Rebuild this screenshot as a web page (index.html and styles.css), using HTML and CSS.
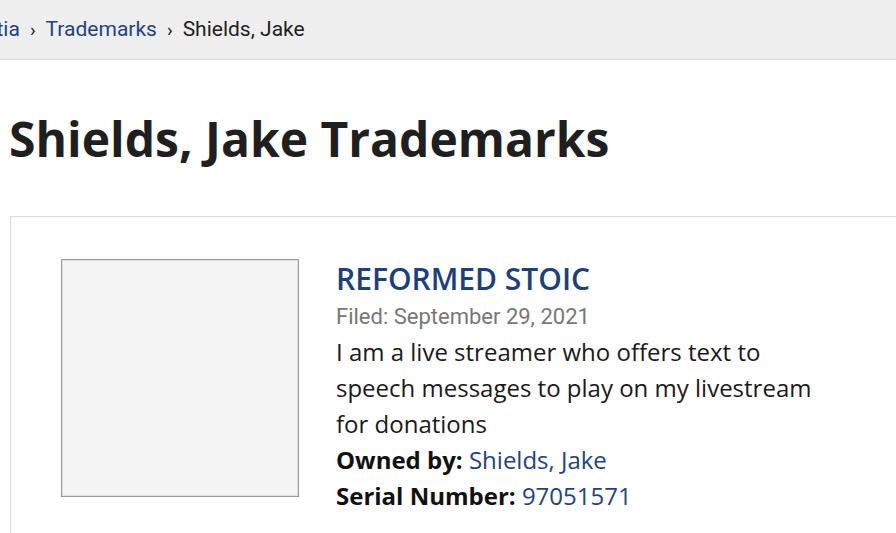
FILE: index.html
```html
<!DOCTYPE html>
<html>
<head>
<meta charset="utf-8">
<link rel="stylesheet" href="styles.css">
</head>
<body>
<nav class="crumbs">
  <a class="crumb first" href="#">Wikitia</a>
  <span class="sep">›</span>
  <a class="crumb" href="#">Trademarks</a>
  <span class="sep">›</span>
  <span class="crumb current">Shields, Jake</span>
</nav>
<main class="main">
  <h1 class="title">Shields, Jake Trademarks</h1>
  <section class="card">
    <div class="thumb"></div>
    <div class="info">
      <a class="mark" href="#">REFORMED STOIC</a>
      <div class="filed">Filed: September 29, 2021</div>
      <p class="desc">I am a live streamer who offers text to speech messages to play on my livestream for donations</p>
      <div class="row"><b>Owned by:</b> <a href="#">Shields, Jake</a></div>
      <div class="row"><b>Serial Number:</b> <a href="#">97051571</a></div>
    </div>
  </section>
</main>
</body>
</html>
```
FILE: styles.css
```css
html, body { margin: 0; padding: 0; background: #fff; }
body { font-family: "Open Sans", sans-serif; color: #1a1a1a; overflow: hidden; height: 533px; }
a { color: #1d4384; text-decoration: none; }
.crumbs {
  display: flex; align-items: center; padding-bottom: 1px; box-sizing: border-box;
  height: 60px; background: #eeeeee; border-bottom: 1px solid #d9d9d9;
  font-family: Roboto, sans-serif; font-size: 21px; white-space: nowrap;
}
.crumb.first { margin-left: -43px; }
.sep { margin: 0 10px; font-size: 19px; color: #222; }
.crumb.current { color: #1f1f1f; }
.main { padding-left: 10px; }
.title {
  margin: 48px 0 0 -1px; font-size: 48px; font-weight: 700; line-height: 62px;
  color: #1f1f1f;
}
.card {
  margin-top: 46px; border: 1px solid #dcdcdc; border-right: none; border-bottom: none;
  display: flex; gap: 37px; padding: 42px 0 60px 50px;
}
.thumb {
  width: 236px; height: 236px; flex: none;
  background: #f4f4f4; border: 1px solid #9a9a9a;
  box-shadow: inset 0 0 0 1px #e0e0e0;
}
.info { width: 495px; margin-top: -1px; }
.mark { display: block; font-size: 30px; font-weight: 600; line-height: 42px; color: #1d3f7c; }
.filed { font-family: Roboto, sans-serif; font-size: 22px; color: #777; line-height: 34px; }
.desc { margin: 0; font-size: 24px; line-height: 36px; color: #1a1a1a; }
.row { font-size: 24px; line-height: 36px; }
.row b { font-weight: 700; color: #111; }
```
